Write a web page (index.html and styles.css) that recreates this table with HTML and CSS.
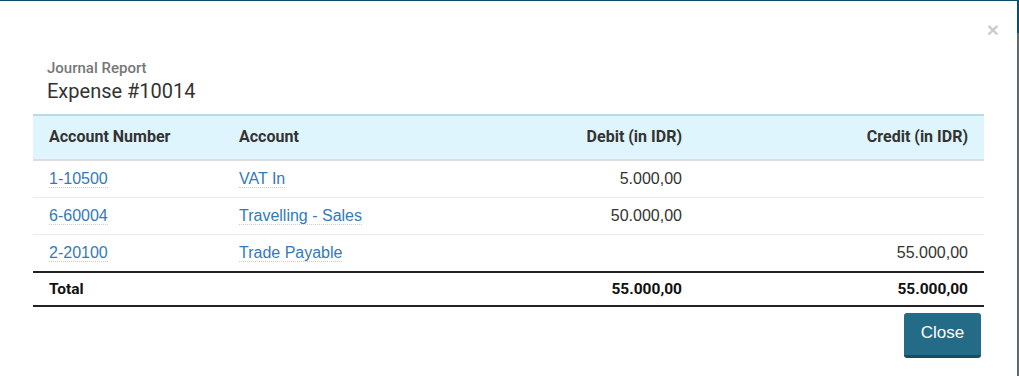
FILE: index.html
```html
<!DOCTYPE html>
<html>
<head>
<meta charset="utf-8">
<link rel="stylesheet" href="styles.css">
</head>
<body>
<div class="modal">
  <div class="close-row"><button class="close" type="button">×</button></div>
  <div class="title-block">
    <div class="subtitle">Journal Report</div>
    <h4 class="title">Expense #10014</h4>
  </div>
  <table class="journal">
    <thead>
      <tr>
        <th class="c-num">Account Number</th>
        <th class="c-acc">Account</th>
        <th class="c-amt">Debit (in IDR)</th>
        <th class="c-amt c-cred">Credit (in IDR)</th>
      </tr>
    </thead>
    <tbody>
      <tr>
        <td><a class="link">1-10500</a></td>
        <td><a class="link">VAT In</a></td>
        <td class="c-amt">5.000,00</td>
        <td class="c-amt"></td>
      </tr>
      <tr>
        <td><a class="link">6-60004</a></td>
        <td><a class="link">Travelling - Sales</a></td>
        <td class="c-amt">50.000,00</td>
        <td class="c-amt"></td>
      </tr>
      <tr>
        <td><a class="link">2-20100</a></td>
        <td><a class="link">Trade Payable</a></td>
        <td class="c-amt"></td>
        <td class="c-amt">55.000,00</td>
      </tr>
    </tbody>
    <tfoot>
      <tr>
        <td>Total</td>
        <td></td>
        <td class="c-amt">55.000,00</td>
        <td class="c-amt">55.000,00</td>
      </tr>
    </tfoot>
  </table>
  <div class="footer">
    <button class="btn-close" type="button">Close</button>
  </div>
</div>
</body>
</html>
```

FILE: styles.css
```css
html, body {
  margin: 0;
  padding: 0;
  height: 100%;
}
body {
  background: linear-gradient(to bottom, #0b4d68 0, #0b4d68 33px, #5f6a70 33px, #5f6a70 100%);
  font-family: "Liberation Sans", Arial, sans-serif;
  overflow: hidden;
}
.modal {
  margin: 1px 2px 0 0;
  height: 375px;
  background: #fff;
  padding: 0 18px 0 33px;
  box-sizing: border-box;
}
.close-row {
  display: flex;
  justify-content: flex-end;
  padding-top: 18px;
  height: 21px;
}
.close {
  border: 0;
  background: none;
  padding: 0;
  font-family: "Liberation Sans", Arial, sans-serif;
  font-size: 21px;
  font-weight: bold;
  line-height: 1;
  color: #000;
  opacity: 0.2;
  cursor: pointer;
}
.title-block {
  padding: 18px 0 0 14px;
  font-family: Roboto, "Liberation Sans", sans-serif;
}
.subtitle {
  font-size: 15px;
  font-weight: 500;
  color: #777;
  line-height: 20px;
}
.title {
  margin: 1px 0 0;
  font-size: 20px;
  font-weight: 400;
  color: #333;
  line-height: 24px;
}
.journal {
  margin-top: 11px;
  width: 951px;
  border-collapse: collapse;
  font-size: 16px;
  color: #333;
}
.journal thead th {
  background: #dff5fd;
  border-top: 2px solid #b8dae6;
  border-bottom: 2px solid #dddddd;
  font-family: Roboto, "Liberation Sans", sans-serif;
  font-weight: 700;
  font-size: 16px;
  text-align: left;
  padding: 11px 16px 12px;
  line-height: 20px;
  color: #333;
}
.journal tbody td {
  padding: 8px 16px;
  line-height: 20px;
  border-top: 1px solid #eaeaea;
}
.journal tbody tr:first-child td {
  border-top: 0;
}
.journal tfoot td {
  border-top: 2px solid #222;
  border-bottom: 2px solid #222;
  padding: 6px 16px;
  line-height: 20px;
  font-family: Roboto, "Liberation Sans", sans-serif;
  font-weight: 700;
  font-size: 15.5px;
  color: #111;
}
.journal .c-num { width: 158px; }
.journal .c-acc { width: 200px; }
.journal .c-cred { width: 254px; }
.journal .c-amt { text-align: right; }
.link {
  color: #337ab7;
  text-decoration: none;
  border-bottom: 1px dotted #ccc;
}
.footer {
  display: flex;
  justify-content: flex-end;
  padding: 6px 3px 0 0;
  width: 951px;
  box-sizing: border-box;
}
.btn-close {
  background: #236b86;
  color: #fff;
  border: 0;
  border-bottom: 3px solid #1a4d61;
  border-radius: 3px;
  width: 77px;
  height: 45px;
  font-family: "Liberation Sans", Arial, sans-serif;
  font-size: 17px;
  padding: 0 0 2px;
  cursor: pointer;
}
```
